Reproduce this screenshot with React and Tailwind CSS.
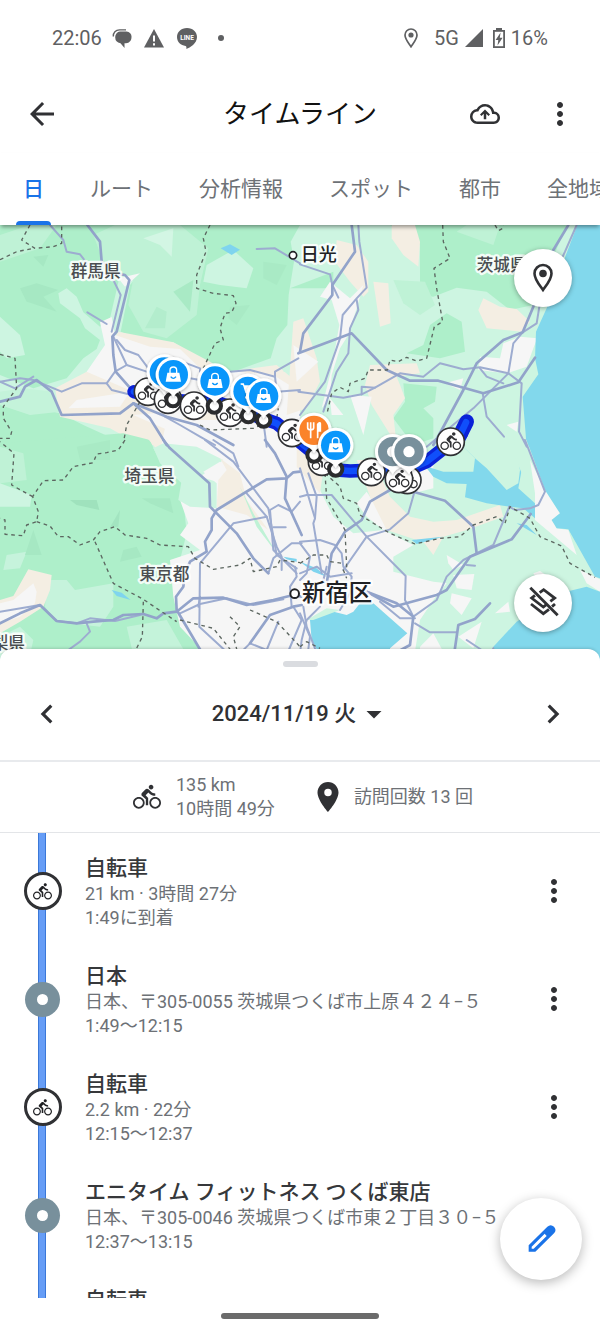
import React from "react";
import {
  MdArrowBack,
  MdArrowDropDown,
  MdChevronLeft,
  MdChevronRight,
  MdMoreVert,
  MdPlace,
} from "react-icons/md";

const WHEELS =
  "M5 12c-2.8 0-5 2.2-5 5s2.2 5 5 5 5-2.2 5-5-2.2-5-5-5zm0 8.5c-1.9 0-3.5-1.6-3.5-3.5s1.6-3.5 3.5-3.5 3.5 1.6 3.5 3.5-1.6 3.5-3.5 3.5zM19 12c-2.8 0-5 2.2-5 5s2.2 5 5 5 5-2.2 5-5-2.2-5-5-5zm0 8.5c-1.9 0-3.5-1.6-3.5-3.5s1.6-3.5 3.5-3.5 3.5 1.6 3.5 3.5-1.6 3.5-3.5 3.5z";
const RIDER =
  "M15.5 5.5c1.1 0 2-.9 2-2s-.9-2-2-2-2 .9-2 2 .9 2 2 2zM10.8 10.5l2.4-2.4.8.8c1.3 1.3 3 2.1 5.1 2.1V9c-1.5 0-2.7-.6-3.6-1.5l-1.9-1.9c-.5-.4-1-.6-1.6-.6s-1.1.2-1.4.6L7.8 8.4c-.4.4-.6.9-.6 1.4 0 .6.2 1.1.6 1.4L11 14v5h2v-6.2l-2.2-2.3z";

function BikeIcon({ className }) {
  return (
    <svg viewBox="0 0 24 24" className={className} fill="currentColor" aria-hidden="true">
      <path d={WHEELS} />
      <path d={RIDER} />
    </svg>
  );
}

/* ---------- map ---------- */

/* The map is drawn in four tiles, each 900 units wide. */
const TILES = [
  {
    at: "translate(0 0)",
    areas: [
      ["#aeefca", "0,0 900,0 872,50 882,110 866,210 862,300 830,340 812,400 700,440 620,412 520,352 410,340 362,320 390,180 420,146 360,150 330,280 300,305 250,262 230,215 200,190 175,205 180,235 240,280 255,310 300,345 290,372 250,400 200,460 100,490 0,450"],
      ["#bff2d6", "345,0 540,0 625,70 600,180 590,270 500,340 430,320 385,240 400,160 310,110 280,30"],
      ["#bff2d6", "0,30 90,0 170,0 120,70 0,110"],
      ["#cdf5e1", "0,275 60,330 75,390 20,400 0,380"],
      ["#cdf5e1", "620,120 700,75 760,130 740,190 660,180 610,170"],
      ["#d3f6e4", "430,40 520,10 515,95 480,60"],
      ["#a6e8c3", "60,190 110,175 175,195 130,215 170,260 95,235 80,230"],
      ["#a6e8c3", "100,95 145,90 130,125"],
      ["#b3edcd", "435,310 470,245 500,260 495,310"],
      ["#a9eac5", "520,200 580,165 570,260"],
      ["#a9eac5", "690,245 750,240 710,300 685,280"],
      ["#a9eac5", "790,110 860,120 830,180 790,160"],
      ["#7fd4ee", "662,70 690,58 720,74 695,90"],
      ["#aeefca", "0,525 180,565 250,600 370,655 370,700 0,700"],
      ["#c4f3da", "0,500 70,490 160,500 180,560 90,570 0,540"],
      ["#f4eee3", "165,490 260,440 320,380 355,320 520,352 630,410 680,440 830,420 900,480 900,660 420,660 330,610 180,575"],
      ["#f6f6f6", "300,292 335,276 345,330 450,365 540,372 600,430 820,450 900,500 900,590 800,600 640,560 500,590 400,500 260,440 315,360"],
      ["#f6f6f6", "355,160 420,145 375,185"],
      ["#f6f6f6", "230,525 390,500 360,545 205,550"],
      ["#f6f6f6", "400,570 520,560 640,640 560,640"],
      ["#f6f6f6", "560,660 640,640 900,600 900,660"],
      ["#cdf5e1", "850,440 900,330 900,440"],
    ],
    roads: [
      "262,0 300,50 305,110 345,145 375,150 388,165 350,320 337,335 340,390 347,440 400,500",
      "0,530 60,515 75,485 110,465 155,500 185,570 360,565 400,535 500,575 590,600 700,660",
      "400,535 450,580 500,660",
    ],
    thin: [
      "150,0 190,45 200,80 240,88 265,120 340,165 362,210 335,320",
      "262,262 320,297",
      "340,335 380,420 345,440 320,475 335,495 395,510",
      "350,345 375,375 415,390 445,430",
      "380,420 440,440",
      "0,470 60,460 100,465 185,500 245,475 320,475",
      "0,470 45,490 100,455",
      "495,575 540,600 600,635 645,660",
      "560,415 600,430 600,440",
      "570,460 600,465",
      "690,440 750,435 825,455 825,440 895,400",
      "770,72 825,70 900,115",
      "825,455 830,500 900,495",
      "790,590 800,665",
    ],
    borders: [
      "90,0 65,45 105,70 160,65 185,55 185,0",
      "0,104 50,80 100,70",
      "630,0 610,40 618,80 590,150 590,190 640,205 700,212 708,235 695,262 675,265 660,310 670,345 645,355 610,430",
      "0,388 45,400 50,490 10,545 10,580 35,620 30,640 0,640",
      "420,530 380,600 370,655",
      "600,600 630,615 760,610 830,580 835,550",
    ],
  },
  {
    at: "translate(900 0)",
    areas: [
      ["#aeefca", "270,0 800,0 700,240 630,255 560,200 470,188 400,215 360,210 360,60"],
      ["#bff2d6", "500,0 600,0 580,60 470,20"],
      ["#aeefca", "440,265 485,290 495,380 420,400 320,385 370,360 390,300"],
      ["#bff2d6", "280,165 375,170 405,240 360,270 310,235"],
      ["#aeefca", "310,475 410,485 405,530 370,550 400,580 400,640 340,660 280,580 315,530"],
      ["#aeefca", "-30,190 35,165 100,140 100,190"],
      ["#f4eee3", "275,0 345,0 360,50 355,125 310,90 275,40"],
      ["#f4eee3", "110,45 170,60 205,110 205,200 190,215 150,170 105,110"],
      ["#f4eee3", "220,170 265,175 272,295 240,305"],
      ["#f4eee3", "550,220 600,245 650,252 690,290 665,320 560,310 535,255"],
      ["#f4eee3", "-20,290 10,280 50,400 60,470 20,550 -40,570"],
      ["#f4eee3", "210,420 350,415 360,445 290,455 300,480 315,520 280,570 290,660 240,580 215,540 195,480"],
      ["#f6f6f6", "60,215 90,170 150,220 190,180 170,250 145,330 120,370 95,450 90,520 65,550 95,430 118,300 95,225"],
      ["#f6f6f6", "150,510 215,515 190,630"],
      ["#f6f6f6", "-20,360 55,410 -10,470"],
      ["#f6f6f6", "90,520 130,570 95,570"],
      ["#f6f6f6", "610,355 660,335 712,340 700,370 680,425 620,445 535,435 540,395 600,400"],
      ["#f6f6f6", "620,600 655,590 650,620"],
      ["#f6f6f6", "435,475 490,460 480,495"],
      ["#82d8ec", "832,0 900,0 900,665 680,665 668,515 715,448 705,400 708,320 740,250 790,110"],
    ],
    roads: [
      "155,0 165,80 97,180 97,210 10,325 0,380",
      "-5,385 155,325 260,435 330,467 415,467 550,505 655,472 705,398",
      "805,0 760,75 700,245 668,322 610,345 530,415 490,495 425,615 400,660",
    ],
    thin: [
      "175,0 178,50 200,188 170,220 128,270 120,340 75,470 0,570",
      "0,118 90,148 97,180 115,218",
      "170,225 175,255 150,310 145,385 110,440 70,560",
      "-5,500 130,518 185,508 185,485 225,488 300,445 370,455 420,415 490,433 540,427 625,445 665,475 657,620 680,665",
      "830,0 795,80 718,245 710,295 668,322 640,355 625,445 520,550 380,665",
      "185,508 225,488",
      "540,430 560,455 610,475",
      "548,505 560,575 612,635",
    ],
    borders: [
      "428,0 430,50 450,100 402,130 410,190 428,290 403,305 380,400 350,408 320,397 295,410 270,405 262,435 205,435 195,460 150,475 145,500 120,487 95,505 80,570",
      "585,0 595,17 608,10 610,0",
    ],
  },
  {
    at: "translate(0 645)",
    areas: [
      ["#aeefca", "0,10 370,-20 450,0 480,70 545,130 560,280 540,360 520,430 540,520 600,560 640,645 0,645"],
      ["#bff2d6", "0,20 70,40 80,120 0,130"],
      ["#cdf5e1", "0,130 95,165 90,200 0,200"],
      ["#c6f3dc", "140,420 200,420 225,450 340,430 340,500 300,560 170,545 135,500"],
      ["#c6f3dc", "20,345 80,335 60,385 10,390"],
      ["#a9eac5", "230,20 330,0 330,60 240,60"],
      ["#9fe2bd", "210,180 290,180 298,210 230,195"],
      ["#a2e4c0", "360,210 355,260 330,262"],
      ["#a6e8c3", "100,270 125,345 75,345"],
      ["#a6e8c3", "370,330 410,320 425,350 360,365"],
      ["#a6e8c3", "425,175 510,175 520,220 450,190"],
      ["#c6f3dc", "0,590 60,560 100,600 90,645 0,645"],
      ["#c4f3da", "380,560 500,540 560,645 400,645"],
      ["#f4eee3", "85,388 155,405 150,450 130,500 60,545 0,580 0,480 40,468"],
      ["#f6f6f6", "0,490 40,480 100,430 110,455 105,490 60,530 0,550"],
      ["#f4eee3", "430,-20 500,-20 480,40"],
      ["#f6f6f6", "500,-60 920,-60 920,645 620,645 540,560 520,470 510,360 600,330 540,285 565,250 540,180 600,110 480,35"],
      ["#cdf5e1", "460,25 490,10 590,20 670,60 600,110 650,125 650,205 570,200 535,180 545,120 490,80"],
      ["#f6f6f6", "610,95 660,65 690,95 650,130"],
      ["#f4eee3", "660,55 720,100 740,180 805,270 740,225 650,200 655,120 680,90"],
      ["#bff2d6", "720,140 760,220 830,340 770,260"],
      ["#7fd4ee", "335,450 365,458 392,480 350,468"],
      ["#7fd4ee", "850,350 910,360 900,368 860,358"],
    ],
    roads: [
      "490,0 510,25 628,130 630,200 710,280 760,355 805,400",
      "900,95 880,97 860,115 800,118 650,210 635,235 635,270 615,305 620,335 570,365 555,400 550,440 528,470 530,510 610,645",
      "795,0 825,40 860,110 855,175 905,285",
      "0,550 60,520 120,495 170,543 230,550 280,545 340,540 370,525 430,522 470,535 490,520 530,515 580,475 670,473 740,495 820,480 880,465 905,470",
      "750,610 810,525 880,500 905,495",
    ],
    thin: [
      "615,0 700,65 805,205 830,345 890,385",
      "640,0 700,40 715,80",
      "900,185 875,215 835,195 810,210 820,330 890,400",
      "740,160 800,230 830,320 845,350 845,390",
      "820,262 857,262",
      "905,310 875,310 820,355 805,400",
      "800,230 700,250 600,370 598,560 690,645",
      "0,515 120,495 170,543 230,550 270,535 345,543 420,525",
      "260,550 270,575 240,605 205,630",
      "540,520 600,492 680,475 760,495 850,478",
      "600,470 595,500",
      "835,545 800,630 750,610 715,645",
      "905,540 860,645",
      "880,500 905,540",
      "885,380 890,410 870,440 875,500",
    ],
    borders: [
      "375,0 355,30 320,38 290,42 280,68 220,80 190,120 130,122 98,170 115,215 110,245 80,255 70,287 15,283 15,240 0,235",
      "110,245 150,258 175,290 205,290 240,315 280,300 300,275 345,260 375,285 440,295 480,315 565,320 585,355 640,388 720,375 750,355 760,395 830,380 840,360 900,368",
      "285,305 340,430 430,478 470,505 530,545",
      "540,540 640,565 700,640",
      "430,485 427,590 400,645",
      "98,170 35,135 42,40 0,5",
      "750,510 830,545 900,620",
      "690,530 720,560 700,590 715,645",
    ],
  },
  {
    at: "translate(900 645)",
    areas: [
      ["#f6f6f6", "-10,60 60,150 100,230 160,280 250,270 340,315 280,350 280,395 400,425 440,430 400,480 360,540 340,665 -10,665"],
      ["#f4eee3", "-10,20 40,60 70,90 60,160 -10,80"],
      ["#f6f6f6", "170,190 200,155 230,200 290,260 250,270 200,230"],
      ["#f4eee3", "170,60 220,60 270,170 330,230 400,245 470,240 600,195 610,230 500,270 430,290 350,300 260,270 210,170"],
      ["#f4eee3", "370,305 430,290 400,345"],
      ["#f6f6f6", "340,50 400,45 400,145 340,160"],
      ["#82d8ec", "375,78 430,95 520,95 525,55 490,20 485,0 640,0 650,60 665,90 655,145 705,190 705,235 670,205 630,200 560,190 495,172 500,132 440,130 400,110"],
      ["#cdf5e1", "480,-10 640,-10 660,90 655,130 620,150 560,85 525,55 490,20"],
      ["#cdf5e1", "650,0 680,0 735,150 700,180 665,100 640,40"],
      ["#f6f6f6", "690,60 735,150 780,220 755,240 770,265 805,270 830,345 705,240 705,160"],
      ["#f6f6f6", "440,345 490,375 460,390 445,370"],
      ["#f6f6f6", "460,405 523,402 515,450 470,445"],
      ["#f6f6f6", "455,460 515,475 485,525 450,490"],
      ["#f6f6f6", "545,545 520,625 475,590"],
      ["#f6f6f6", "585,520 625,485 630,515"],
      ["#f6f6f6", "360,620 400,580 435,645 360,645"],
      ["#82d8ec", "680,0 900,0 900,415 885,410 805,268 770,265 755,240 780,220 735,150"],
      ["#f6f6f6", "840,390 900,418 900,455 860,430"],
      ["#f6f6f6", "700,400 720,393 760,420 720,430"],
      ["#82d8ec", "900,455 860,440 780,460 650,545 580,620 570,665 900,665"],
      ["#82d8ec", "30,540 80,510 140,525 160,515 180,490 215,485 322,580 270,625 275,665 70,665 35,600"],
      ["#cdf5e1", "20,540 80,505 120,510 40,540"],
      ["#7fd4ee", "335,300 430,290 350,312"],
      ["#7fd4ee", "0,365 50,385 80,410 40,395"],
      ["#7fd4ee", "650,250 680,255 710,285"],
    ],
    roads: [
      "270,150 210,185 185,240 135,275 95,340 80,430",
      "340,155 435,182 520,260 530,340",
      "692,222 635,298 510,350 440,450 410,465 280,500 200,455",
      "570,490 525,537 475,555 462,645",
      "200,455 290,490 340,530 330,615 275,645",
    ],
    thin: [
      "0,170 20,165 95,165 200,290 317,408 315,480 340,530",
      "0,85 45,235 40,250 65,400",
      "25,100 50,170 45,235",
      "345,150 325,220 270,268 200,290 130,390",
      "628,200 580,315 490,360 440,410 410,480 340,530",
      "628,200 645,210 690,205 715,195 735,155 675,0",
      "0,305 60,300 105,315 125,340 130,380 155,410 150,460 120,510",
      "0,400 50,380 90,410 155,400",
      "0,310 30,350 20,400 0,420",
      "10,500 20,560 60,665",
      "0,520 30,590 20,665",
      "60,500 20,540 5,600 0,640",
      "80,380 70,420 100,460",
      "345,550 390,577 468,577",
      "500,600 545,630",
      "500,375 525,377",
      "240,485 300,535 345,535",
      "580,625 575,645",
    ],
    borders: [
      "75,100 80,175 135,270 140,380 130,390 140,415",
      "75,100 120,140 130,175 170,190 180,225 270,280 345,312 420,295 480,290 520,255 590,230 615,250 630,200 690,235 720,290 785,318 810,370 885,412",
      "0,370 40,345 80,345 90,365 130,370",
      "0,620 20,605 60,625",
    ],
  },
];

const BIKES = [
  [444, 500],
  [504, 524],
  [582, 542],
  [690, 563],
  [876, 624],
  [966, 710],
  [1222, 765],
  [1114, 741],
  [1197, 762],
  [1352, 650],
];

const RINGS = [
  [519, 524],
  [643, 543],
  [745, 572],
  [791, 585],
  [942, 690],
  [1007, 732],
];

const PINS = [
  [493, 441, "plain"],
  [520, 449, "bag"],
  [645, 468, "bag"],
  [744, 499, "cart"],
  [791, 513, "bag"],
  [942, 616, "food"],
  [1007, 661, "bag"],
  [1178, 680, "stop"],
  [1227, 680, "stop"],
];

const PIN_FILL = {
  plain: "#0996fb",
  bag: "#0996fb",
  cart: "#0996fb",
  food: "#fb832a",
  stop: "#78909c",
};

function BikeBadge({ x, y }) {
  return (
    <g transform={`translate(${x} ${y})`}>
      <circle r="41" fill="#fff" stroke="#303134" strokeWidth="5" />
      <g transform="translate(-31 -32) scale(2.6)" fill="#303134">
        <path d={WHEELS} />
        <path d={RIDER} />
      </g>
    </g>
  );
}

function Pin({ x, y, kind }) {
  return (
    <g transform={`translate(${x} ${y})`}>
      <path
        d="M0 68 C-4 60 -10 54 -20 49 A53 53 0 1 1 20 49 C10 54 4 60 0 68Z"
        fill="#fff"
        filter="url(#pinShadow)"
      />
      <circle r="44" fill={PIN_FILL[kind]} />
      {kind === "bag" && (
        <g>
          <path d="M-18 -6 H18 L23 21 H-23Z" fill="#fff" />
          <path d="M-10 -4 V-13 A10 10 0 0 1 10 -13 V-4" fill="none" stroke="#fff" strokeWidth="4" />
          <path d="M-8 6 Q0 16 8 6" fill="none" stroke="#0996fb" strokeWidth="4" />
        </g>
      )}
      {kind === "cart" && (
        <g>
          <path d="M-22 -22 H-14 L-6 4 H14 L22 -16 H-12" fill="#fff" stroke="#fff" strokeWidth="4" />
          <circle cx="-4" cy="18" r="5" fill="#fff" />
          <circle cx="14" cy="18" r="5" fill="#fff" />
        </g>
      )}
      {kind === "food" && (
        <g fill="none" stroke="#fff" strokeWidth="5">
          <path d="M-19 -24 V-8 Q-19 -2 -10 -2 Q-1 -2 -1 -8 V-24 M-10 -24 V24" />
          <path d="M11 24 V-18 Q18 -26 19 -20 V2 H11" fill="#fff" />
        </g>
      )}
      {kind === "stop" && <circle r="17" fill="#fff" />}
    </g>
  );
}

function MapLabel({ x, y, size, fill = "#4a4d50", children }) {
  return (
    <text
      x={x}
      y={y}
      fontSize={size}
      fill={fill}
      stroke="#fff"
      strokeOpacity="0.85"
      strokeWidth="14"
      strokeLinejoin="round"
      paintOrder="stroke"
      fontWeight="500"
    >
      {children}
    </text>
  );
}

function MapView() {
  return (
    <svg
      viewBox="0 0 1800 1308"
      preserveAspectRatio="xMidYMid slice"
      className="block h-full w-full font-['Noto_Sans_CJK_JP',sans-serif]"
      role="img"
      aria-label="移動経路の地図"
    >
      <defs>
        <filter id="pinShadow" x="-30%" y="-30%" width="160%" height="160%">
          <feDropShadow dx="0" dy="3" stdDeviation="4" floodOpacity="0.35" />
        </filter>
      </defs>
      <rect width="1800" height="1308" fill="#cdf5e1" />
      {TILES.map((tile) => (
        <g key={tile.at} transform={tile.at}>
          {tile.areas.map(([fill, points]) => (
            <polygon key={points} points={points} fill={fill} />
          ))}
        </g>
      ))}
      {TILES.map((tile) => (
        <g key={tile.at} transform={tile.at} fill="none" strokeLinejoin="round" strokeLinecap="round">
          {tile.thin.map((points) => (
            <polyline key={points} points={points} stroke="#9dacd0" strokeWidth="6" />
          ))}
          {tile.roads.map((points) => (
            <polyline key={points} points={points} stroke="#92a3ca" strokeWidth="8" />
          ))}
          {tile.borders.map((points) => (
            <polyline
              key={points}
              points={points}
              stroke="#5c6660"
              strokeWidth="4"
              strokeDasharray="11 11"
              strokeLinecap="butt"
            />
          ))}
        </g>
      ))}

      <g fill="none" strokeLinejoin="round" strokeLinecap="round">
        <path
          d="M402 500 L500 525 L590 530 L645 530 L745 565 L830 595 L880 635 L960 700 L1010 735 L1050 738 L1120 735 L1200 745 L1280 710 L1350 655 L1385 625"
          stroke="#0a22d8"
          strokeWidth="40"
        />
        <path d="M1375 640 L1400 590" stroke="#0a22d8" strokeWidth="44" />
        <path
          d="M402 500 L500 525 L590 530 L645 530 L745 565 L830 595 L880 635 L960 700 L1010 735 L1050 738 L1120 735 L1200 745 L1280 710 L1350 655 L1380 630 L1398 592"
          stroke="#104ffb"
          strokeWidth="20"
        />
      </g>

      {BIKES.map(([x, y]) => (
        <BikeBadge key={`${x}-${y}`} x={x} y={y} />
      ))}
      {RINGS.map(([x, y]) => (
        <circle key={x} cx={x} cy={y} r="20" fill="#fff" stroke="#2b2c2e" strokeWidth="12" />
      ))}
      {PINS.map(([x, y, kind]) => (
        <Pin key={x} x={x} y={y} kind={kind} />
      ))}

      <MapLabel x="212" y="157" size="50">群馬県</MapLabel>
      <MapLabel x="902" y="109" size="54" fill="#202124">日光</MapLabel>
      <MapLabel x="1430" y="138" size="50">茨城県</MapLabel>
      <MapLabel x="373" y="771" size="50">埼玉県</MapLabel>
      <MapLabel x="418" y="1064" size="50">東京都</MapLabel>
      <MapLabel x="-25" y="1273" size="50">梨県</MapLabel>
      <MapLabel x="906" y="1128" size="70" fill="#202124">新宿区</MapLabel>
      <circle cx="879" cy="91" r="11" fill="#fff" stroke="#202124" strokeWidth="5" />
      <circle cx="884" cy="1106" r="13" fill="#fff" stroke="#202124" strokeWidth="6" />
    </svg>
  );
}

/* ---------- status bar ---------- */

function StatusBar() {
  return (
    <div className="flex h-[75px] shrink-0 items-center justify-between px-[52px] text-xl text-[#5f6062]">
      <div className="flex items-center">
        <span>22:06</span>
        <svg viewBox="0 0 20 20" className="ml-2.5 size-5" fill="currentColor" aria-hidden="true">
          <path d="M8 3.500h6.500a5 5 0 0 1 5 5.500c0 3.500-2 6-5.500 6.200h-1.500V20L8.500 15.200A6 6 0 0 1 3.200 9.300 5.500 5.500 0 0 1 8 3.500z" />
          <path d="M1.300 8.500C1 4.500 3.800 1.900 7.500 1.900H14" fill="none" stroke="currentColor" strokeWidth="1.400" />
        </svg>
        <svg viewBox="0 0 20 20" className="ml-3 size-5" aria-hidden="true">
          <path d="M10 1 20 19.500H0z" fill="currentColor" />
          <path d="M10 7.500v6M10 15.200v2.300" stroke="#fff" strokeWidth="2" />
        </svg>
        <svg viewBox="0 0 22 24" className="ml-3 h-6 w-[22px]" aria-hidden="true">
          <path d="M11 2C5 2 1 6 1 11c0 5.200 4 8.300 8.500 9 1 .2 1 1.400.9 3C14 21.500 21 17.500 21 11 21 6 17 2 11 2z" fill="currentColor" />
          <text x="11" y="13.500" textAnchor="middle" fontSize="6.500" fontWeight="700" fill="#fff">
            LINE
          </text>
        </svg>
        <span className="ml-5 size-1.5 rounded-full bg-current" />
      </div>
      <div className="flex items-center">
        <svg viewBox="0 0 14 20" className="h-5 w-3.5" fill="none" aria-hidden="true">
          <path d="M7 18.800C4.500 15 1 11 1 7a6 6 0 0 1 12 0c0 4-3.500 8-6 11.800z" stroke="currentColor" strokeWidth="1.700" />
          <circle cx="7" cy="7" r="2.600" fill="currentColor" />
        </svg>
        <span className="ml-4">5G</span>
        <svg viewBox="0 0 18 18" className="ml-1.5 size-[18px]" aria-hidden="true">
          <path d="M18 0v18H0z" fill="currentColor" />
        </svg>
        <svg viewBox="0 0 12 20" className="ml-2.5 h-5 w-3" aria-hidden="true">
          <path d="M3 0h6v2h3v18H0V2h3z" fill="currentColor" />
          <path d="M1.800 3.800h8.400v14.400H1.800z" fill="#fff" />
          <path d="M7.600 4.500 2.600 12H5.300L4.500 17.500 9.600 9.700H6.800z" fill="currentColor" />
        </svg>
        <span className="ml-1.5">16%</span>
      </div>
    </div>
  );
}

const TABS = ["日", "ルート", "分析情報", "スポット", "都市", "全地域"];

const ENTRIES = [
  { kind: "bike", title: "自転車", lines: ["21 km · 3時間 27分", "1:49に到着"], menu: true },
  {
    kind: "place",
    title: "日本",
    lines: ["日本、〒305-0055 茨城県つくば市上原４２４−５", "1:49〜12:15"],
    menu: true,
  },
  { kind: "bike", title: "自転車", lines: ["2.2 km · 22分", "12:15〜12:37"], menu: true },
  {
    kind: "place",
    title: "エニタイム フィットネス つくば東店",
    lines: ["日本、〒305-0046 茨城県つくば市東２丁目３０−５", "12:37〜13:15"],
    menu: false,
  },
  { kind: "bike", title: "自転車", lines: [], menu: false },
];

function Entry({ entry }) {
  return (
    <li className="flex h-[108px]">
      <div className="relative flex w-[85px] shrink-0 items-center justify-center">
        {entry.kind === "bike" ? (
          <span className="flex size-[38px] items-center justify-center rounded-full border-[3px] border-[#303134] bg-white text-[#202124]">
            <BikeIcon className="size-[19px]" />
          </span>
        ) : (
          <span className="flex size-[35px] items-center justify-center rounded-full bg-[#78909c]">
            <span className="size-[11px] rounded-full bg-white" />
          </span>
        )}
      </div>
      <div className="min-w-0 flex-1 pt-[17px] whitespace-nowrap text-lg leading-6 text-[#6d7176]">
        <h2 className="text-[21px] leading-7 font-medium text-[#36383b]">{entry.title}</h2>
        {entry.lines.map((line) => (
          <p key={line}>{line}</p>
        ))}
      </div>
      {entry.menu && (
        <button type="button" aria-label="その他" className="mr-7 shrink-0 text-[#303134]">
          <MdMoreVert className="size-9" />
        </button>
      )}
    </li>
  );
}

export default function App() {
  return (
    <div className="relative flex h-screen flex-col overflow-hidden bg-white font-[Roboto,'Noto_Sans_CJK_JP',sans-serif] text-[#303134]">
      <StatusBar />

      <header className="grid h-[78px] shrink-0 grid-cols-[1fr_auto_1fr] items-center px-6">
        <button type="button" aria-label="戻る" className="justify-self-start">
          <MdArrowBack className="size-9" />
        </button>
        <h1 className="text-[26px] leading-9 text-[#111]">タイムライン</h1>
        <div className="flex items-center gap-[42px] justify-self-end">
          <button type="button" aria-label="バックアップ">
            <svg viewBox="0 0 24 24" className="size-[30px]" fill="currentColor">
              <path d="M19.350 10.040C18.670 6.590 15.640 4 12 4 9.110 4 6.610 5.640 5.360 8.040A5.994 5.994 0 0 0 0 14c0 3.310 2.690 6 6 6h13c2.760 0 5-2.240 5-5 0-2.640-2.050-4.780-4.650-4.960zM19 18H6c-2.210 0-4-1.790-4-4 0-2.050 1.530-3.760 3.560-3.970l1.070-.110.500-.950A5.469 5.469 0 0 1 12 6c2.620 0 4.880 1.860 5.390 4.430l.300 1.500 1.530.110A2.980 2.980 0 0 1 22 15c0 1.650-1.350 3-3 3z" />
              <path d="M12 8.300l4 4-1.200 1.200-1.800-1.700v4.400h-2v-4.400l-1.800 1.700L8 12.300z" />
            </svg>
          </button>
          <button type="button" aria-label="メニュー" className="-mr-0.5">
            <MdMoreVert className="size-9" />
          </button>
        </div>
      </header>

      <nav className="relative z-10 h-[72px] shrink-0 bg-white shadow-[0_3px_4px_-1px_rgba(0,0,0,0.4)]">
        <div role="tablist" className="flex h-full overflow-hidden text-[21px] text-[#6d7176]">
          {TABS.map((tab, i) => (
            <button
              key={tab}
              type="button"
              role="tab"
              aria-selected={i === 0}
              className="relative h-full shrink-0 px-[23px] pt-0.5 whitespace-nowrap aria-selected:font-medium aria-selected:text-[#1a73e8]"
            >
              {tab}
              {i === 0 && (
                <span className="absolute bottom-0 left-4 h-1 w-[35px] rounded-t bg-[#1a73e8]" />
              )}
            </button>
          ))}
        </div>
      </nav>

      <section className="relative h-[436px] shrink-0">
        <MapView />
        <button
          type="button"
          aria-label="場所"
          className="absolute top-6 right-7 flex size-[58px] items-center justify-center rounded-full bg-white shadow-[0_1px_5px_rgba(0,0,0,0.35)]"
        >
          <svg viewBox="0 0 20 30" className="h-[30px] w-5" fill="none">
            <path d="M10 27C6.500 22 1.500 16.500 1.500 10.500a8.500 8.500 0 0 1 17 0C18.500 16.500 13.500 22 10 27z" stroke="currentColor" strokeWidth="2.600" />
            <circle cx="10" cy="10.500" r="3.800" fill="currentColor" />
          </svg>
        </button>
        <button
          type="button"
          aria-label="レイヤを消去"
          className="absolute right-7 bottom-[29px] flex size-[58px] items-center justify-center rounded-full bg-white shadow-[0_1px_5px_rgba(0,0,0,0.35)]"
        >
          <svg viewBox="0 0 132 132" className="size-11" fill="none" stroke="currentColor" strokeWidth="8.500">
            <path d="M56 35 68 26 101 51 88 61M42 43 32 51 67 78 77 70" />
            <path d="M30 69 67 98 84 85M93 77 102 69" />
            <path d="M28 20 110 103" />
          </svg>
        </button>
      </section>

      <main className="relative z-10 -mt-3 flex min-h-0 flex-1 flex-col rounded-t-xl bg-white pt-3 shadow-[0_-2px_3px_-1px_rgba(0,0,0,0.15)]">
        <div className="mx-auto h-1.5 w-[35px] shrink-0 rounded-full bg-[#dadce0]" />
        <div className="flex h-[95px] shrink-0 items-center justify-between border-b-2 border-[#e8eaed] px-7">
          <button type="button" aria-label="前の日">
            <MdChevronLeft className="size-[38px]" />
          </button>
          <button type="button" className="ml-1 flex items-center text-[22px] font-medium">
            2024/11/19 火
            <MdArrowDropDown className="size-9" />
          </button>
          <button type="button" aria-label="次の日">
            <MdChevronRight className="size-[38px]" />
          </button>
        </div>

        <div className="flex h-[71px] shrink-0 items-center justify-center border-b border-[#e3e5e8] pl-1.5 text-lg leading-6 text-[#6d7176]">
          <BikeIcon className="mr-[15px] size-7 text-[#303134]" />
          <p>
            135 km
            <br />
            10時間 49分
          </p>
          <MdPlace className="mr-2 ml-[35px] size-9 text-[#303134]" />
          <p>訪問回数 13 回</p>
        </div>

        <div className="min-h-0 flex-1 overflow-hidden">
          <ul className="relative pt-1">
            <span className="absolute inset-y-0 left-[38px] w-2 border-x border-[#3b78d8] bg-[#669df6]" />
            {ENTRIES.map((entry, i) => (
              <Entry key={i} entry={entry} />
            ))}
          </ul>
        </div>
      </main>

      <footer className="flex h-[35px] shrink-0 items-center justify-center bg-white">
        <div className="h-1.5 w-[158px] rounded-full bg-[#6b6b6b]" />
      </footer>

      <button
        type="button"
        aria-label="編集"
        className="absolute right-[18px] bottom-[53px] z-20 flex size-[82px] items-center justify-center rounded-full bg-white text-[#1a73e8] shadow-[0_3px_12px_rgba(0,0,0,0.28)]"
      >
        <svg viewBox="0 0 150 150" className="size-[50px]" fill="currentColor">
          <path
            fillRule="evenodd"
            d="M38 113V94L94 38Q104 29 114 38Q123 48 114 58L58 113ZM47 104H53L92 66L86 59L47 98Z"
          />
        </svg>
      </button>
    </div>
  );
}
